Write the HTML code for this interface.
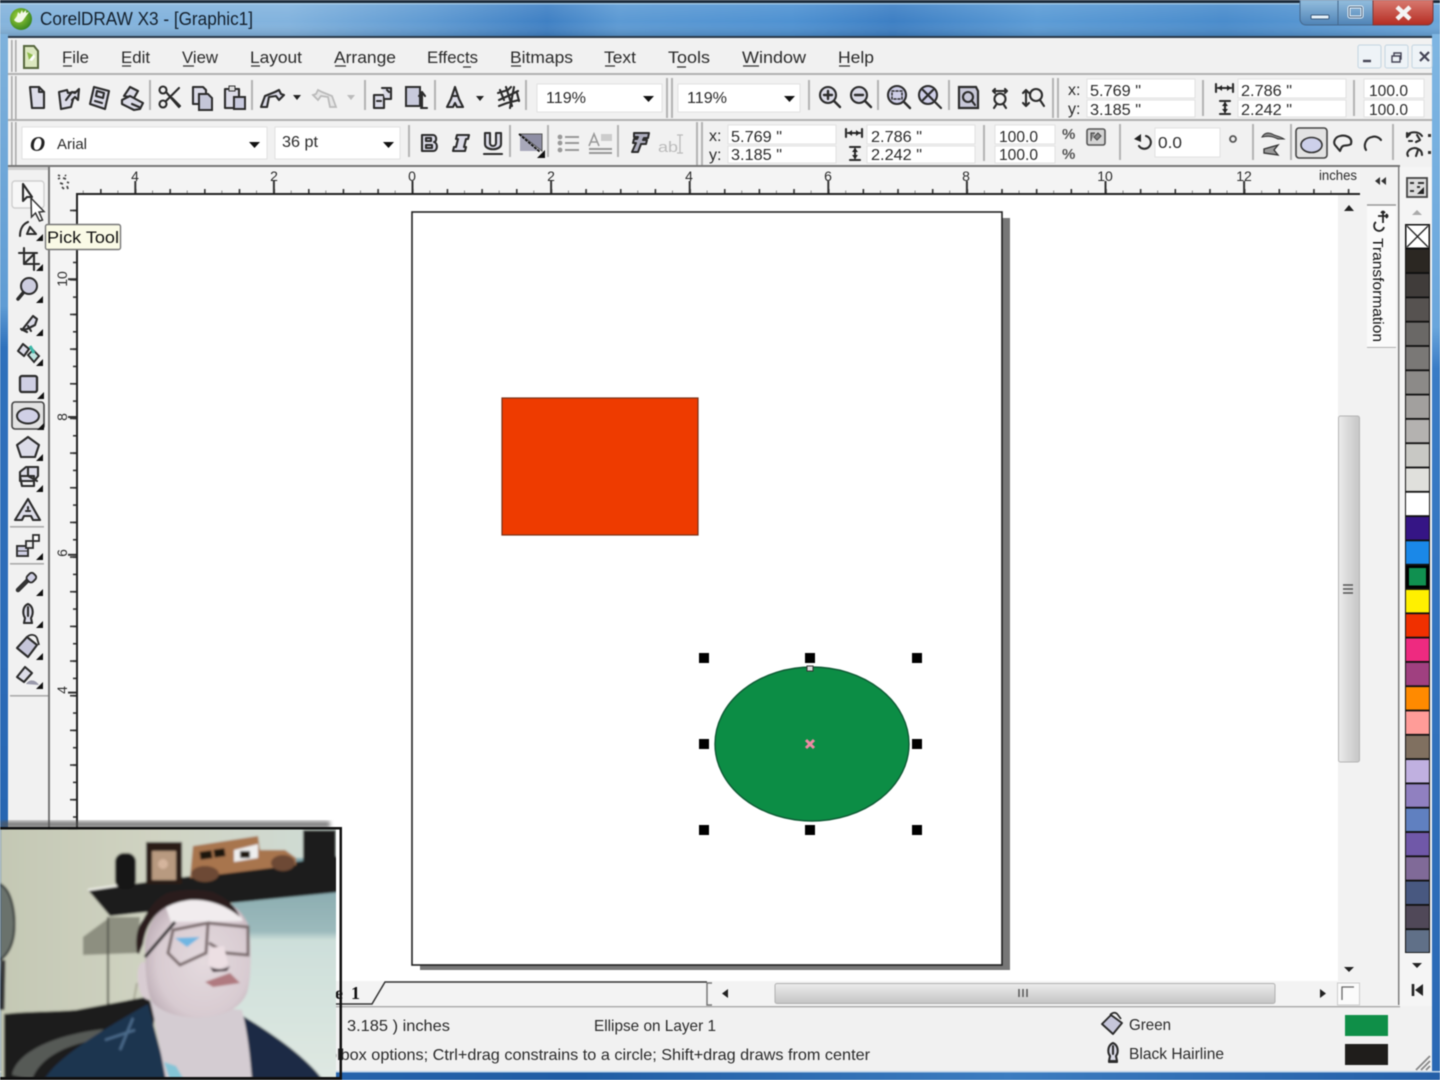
<!DOCTYPE html>
<html><head><meta charset="utf-8"><title>CorelDRAW X3</title>
<style>
html,body{margin:0;padding:0;background:#f1f1f1;width:1440px;height:1080px;overflow:hidden}
svg{display:block}
#root{filter:blur(.55px)}
text{font-family:"Liberation Sans",sans-serif;fill:#2a2a2a}
.m{font-size:17px}.t{font-size:16px}.s{font-size:15px}
.i{fill:#dcdce8;stroke:#2c2c2c;stroke-width:2.1;stroke-linejoin:round;stroke-linecap:round}
.n{fill:none;stroke:#2c2c2c;stroke-width:2.1;stroke-linejoin:round;stroke-linecap:round}
.g{stroke:#b4b4b4;stroke-width:2;fill:none}
.f{fill:#fff;stroke:#e2e2e2;stroke-width:1}
</style></head><body>
<svg id="root" width="1440" height="1080" viewBox="0 0 1440 1080" xmlns="http://www.w3.org/2000/svg">
<defs>
<linearGradient id="tb" x1="0" x2="1" y1="0" y2="0">
<stop offset="0" stop-color="#85b4dc"/><stop offset=".2" stop-color="#82b3de"/><stop offset=".3" stop-color="#5f9ad2"/><stop offset=".38" stop-color="#3f80c4"/><stop offset=".43" stop-color="#5c9ad4"/><stop offset=".55" stop-color="#4f92d2"/><stop offset=".62" stop-color="#3d7fc4"/><stop offset=".72" stop-color="#5c9cd6"/><stop offset=".85" stop-color="#4a8ccc"/><stop offset="1" stop-color="#6ba6da"/>
</linearGradient>
<linearGradient id="tv" x1="0" x2="0" y1="0" y2="1"><stop offset="0" stop-color="#fff" stop-opacity=".12"/><stop offset=".6" stop-color="#fff" stop-opacity="0"/><stop offset="1" stop-color="#123" stop-opacity=".16"/></linearGradient>
<linearGradient id="lb" x1="0" x2="0" y1="0" y2="1"><stop offset="0" stop-color="#7fb2dc"/><stop offset=".26" stop-color="#5f9cd4"/><stop offset=".3" stop-color="#2f71bc"/><stop offset=".6" stop-color="#2c6cb8"/><stop offset="1" stop-color="#1f5ca8"/></linearGradient>
<linearGradient id="rb" x1="0" x2="0" y1="0" y2="1"><stop offset="0" stop-color="#7fb6e2"/><stop offset=".28" stop-color="#6aa6dc"/><stop offset=".32" stop-color="#3a7cc6"/><stop offset="1" stop-color="#2a68b4"/></linearGradient>
<linearGradient id="bb" x1="0" x2="1" y1="0" y2="0"><stop offset="0" stop-color="#2d6cb6"/><stop offset=".4" stop-color="#1f5ca4"/><stop offset=".7" stop-color="#3c7cc0"/><stop offset="1" stop-color="#245fa8"/></linearGradient>
<linearGradient id="vth" x1="0" x2="1" y1="0" y2="0"><stop offset="0" stop-color="#ececec"/><stop offset=".5" stop-color="#d8d8d8"/><stop offset="1" stop-color="#c6c6c6"/></linearGradient>
<linearGradient id="hth" x1="0" x2="0" y1="0" y2="1"><stop offset="0" stop-color="#ececec"/><stop offset=".5" stop-color="#d8d8d8"/><stop offset="1" stop-color="#c4c4c4"/></linearGradient>
<linearGradient id="cl" x1="0" x2="0" y1="0" y2="1"><stop offset="0" stop-color="#d87a70"/><stop offset="1" stop-color="#b52c22"/></linearGradient>
<linearGradient id="gl" x1="0" x2="0" y1="0" y2="1"><stop offset="0" stop-color="#94bede"/><stop offset="1" stop-color="#4f83b6"/></linearGradient>
<radialGradient id="logo" cx=".4" cy=".4" r=".7"><stop offset="0" stop-color="#a4d63c"/><stop offset="1" stop-color="#2c7c1c"/></radialGradient>
<linearGradient id="wall" x1="0" x2="1" y1="0" y2="0"><stop offset="0" stop-color="#c4c8b4"/><stop offset=".45" stop-color="#d0d3c2"/><stop offset="1" stop-color="#cfdcd6"/></linearGradient>
<linearGradient id="wall2" x1="0" x2="0" y1="0" y2="1"><stop offset="0" stop-color="#7fa3a8"/><stop offset=".33" stop-color="#9cbabc"/><stop offset=".37" stop-color="#cddfda"/><stop offset="1" stop-color="#dfe8e2"/></linearGradient>
<radialGradient id="face" cx=".55" cy=".55" r=".62"><stop offset="0" stop-color="#e4dade"/><stop offset=".7" stop-color="#d8cbd1"/><stop offset="1" stop-color="#b9a9b2"/></radialGradient>
<filter id="bl"><feGaussianBlur stdDeviation="1.100"/></filter>
<filter id="sh"><feGaussianBlur stdDeviation="2"/></filter>
<pattern id="hr" x="412" y="181" width="17.33" height="12" patternUnits="userSpaceOnUse"><rect x="0" y="9.500" width="1" height="2.500" fill="#888"/></pattern>
<pattern id="hr2" x="412" y="181" width="34.66" height="12" patternUnits="userSpaceOnUse"><rect x="0" y="8" width="1.600" height="4" fill="#333"/></pattern>
<pattern id="hr3" x="412" y="181" width="138.6" height="12" patternUnits="userSpaceOnUse"><rect x="-.5" y="0" width="2" height="12" fill="#333"/><rect x="138.1" y="0" width="2" height="12" fill="#333"/></pattern>
<pattern id="vr" x="64" y="1.720" width="12" height="17.33" patternUnits="userSpaceOnUse"><rect x="9" y="0" width="3" height="1.600" fill="#333"/></pattern>
<pattern id="vr2" x="64" y="1.720" width="12" height="34.66" patternUnits="userSpaceOnUse"><rect x="6" y="0" width="6" height="1.600" fill="#333"/></pattern>
<pattern id="vr3" x="64" y="140.4" width="12" height="137.8" patternUnits="userSpaceOnUse"><rect x="4" y="0" width="8" height="2" fill="#333"/></pattern>
<symbol id="tri" viewBox="0 0 8 8" overflow="visible"><path d="M7 0V7H0z" fill="#111"/></symbol>
</defs>

<rect width="1440" height="1080" fill="#f1f1f1"/>
<!-- window frame -->
<rect width="1440" height="36" fill="url(#tb)"/><rect width="1440" height="36" fill="url(#tv)"/>
<rect width="1440" height="3" fill="#1c2c3c"/>
<rect y="3" width="1440" height="1.500" fill="#b8d8ee" opacity=".7"/>
<rect x="0" y="34" width="8" height="1046" fill="url(#lb)"/>
<rect x="1432" y="34" width="8" height="1046" fill="url(#rb)"/>
<rect x="8" y="36" width="1424" height="2" fill="#2a3a4a"/>
<rect x="0" y="1072" width="1440" height="8" fill="url(#bb)"/>
<rect x="0" y="1071" width="1440" height="1.500" fill="#bcd2e8"/>

<!-- title -->
<circle cx="21" cy="19" r="11" fill="url(#logo)"/>
<path d="M14 20c3 4 8 3 10-1l5-7-3 1 0-3-3 3-1-3-2 4-2-2-1 4z" fill="#f2f8e8"/>
<text x="40" y="25" font-size="18" textLength="213" lengthAdjust="spacingAndGlyphs" style="fill:#14202c">CorelDRAW X3 - [Graphic1]</text>

<!-- caption buttons -->
<path d="M1300 0H1433V19a6 6 0 0 1-6 6H1306a6 6 0 0 1-6-6z" fill="url(#gl)" stroke="#46688c"/>
<path d="M1373 0H1433V19a6 6 0 0 1-6 6H1373z" fill="url(#cl)" stroke="#7c3a3a"/>
<line x1="1338" y1="0" x2="1338" y2="25" stroke="#46688c"/>
<rect x="1311" y="15" width="18" height="4" rx="1" fill="#e8f2fa" stroke="#3a5a7c"/>
<rect x="1349" y="7" width="13" height="10" rx="1" fill="none" stroke="#f0f6fa" stroke-width="3"/><rect x="1349" y="7" width="13" height="10" rx="1" fill="none" stroke="#3a5a7c" stroke-width="1"/>
<path d="M1397 7L1410 19M1410 7L1397 19" stroke="#f4f4f4" stroke-width="4.500"/>

<!-- gripper lines & bar separators -->
<rect x="11" y="40" width="1.600" height="32" fill="#aaa"/><rect x="15" y="40" width="1.600" height="32" fill="#aaa"/>
<rect x="11" y="76" width="1.600" height="43" fill="#aaa"/><rect x="15" y="76" width="1.600" height="43" fill="#aaa"/>
<rect x="11" y="122" width="1.600" height="43" fill="#aaa"/><rect x="15" y="122" width="1.600" height="43" fill="#aaa"/>
<rect x="8" y="73" width="1424" height="2" fill="#b0b0b0"/>
<rect x="8" y="119" width="1424" height="2" fill="#b0b0b0"/>
<rect x="8" y="165" width="1392" height="2" fill="#777"/>

<!-- doc icon -->
<path d="M24 46h10l4 5v17H24z" fill="#dce8c0" stroke="#56663c" stroke-width="2"/><path d="M29 60l5-6 1 3-3 4z" fill="#fff"/><path d="M27 52l6 3-4 5z" fill="#8fbc4c"/>

<!-- menu -->
<g class="m">
<text x="62" y="63" textLength="27" lengthAdjust="spacingAndGlyphs">File</text>
<text x="121" y="63" textLength="29" lengthAdjust="spacingAndGlyphs">Edit</text>
<text x="182" y="63" textLength="36" lengthAdjust="spacingAndGlyphs">View</text>
<text x="250" y="63" textLength="52" lengthAdjust="spacingAndGlyphs">Layout</text>
<text x="334" y="63" textLength="62" lengthAdjust="spacingAndGlyphs">Arrange</text>
<text x="427" y="63" textLength="51" lengthAdjust="spacingAndGlyphs">Effects</text>
<text x="510" y="63" textLength="63" lengthAdjust="spacingAndGlyphs">Bitmaps</text>
<text x="604" y="63" textLength="32" lengthAdjust="spacingAndGlyphs">Text</text>
<text x="668" y="63" textLength="42" lengthAdjust="spacingAndGlyphs">Tools</text>
<text x="742" y="63" textLength="64" lengthAdjust="spacingAndGlyphs">Window</text>
<text x="838" y="63" textLength="36" lengthAdjust="spacingAndGlyphs">Help</text>
</g>
<path d="M63 66h9M122 66h9M183 66h11M251 66h9M335 66h11M463 67h8M511 66h10M605 66h10M677 67h9M743 66h16M839 66h11" stroke="#333" stroke-width="1.200" fill="none"/>

<!-- MDI buttons -->
<g fill="#eef3f7" stroke="#c3d4e0"><rect x="1358" y="45" width="23" height="23" rx="2"/><rect x="1385" y="45" width="23" height="23" rx="2"/><rect x="1412" y="45" width="20" height="23" rx="2"/></g>
<path d="M1363 61h8" stroke="#445" stroke-width="2.400"/>
<path d="M1392 56h8v6h-8zM1394 56v-3h7v6h-1" fill="none" stroke="#445" stroke-width="1.400"/>
<path d="M1420 52l9 9M1429 52l-9 9" stroke="#445" stroke-width="2.200"/>

<!-- TOOLBAR 1 -->
<g class="g"><path d="M150 80v30M252 80v30M365 80v30M435 80v30M526 80v30M809 80v30M878 80v30M949 80v30M1203 80v36M1354 80v36"/></g>
<path d="M667 78v40M672 78v40M1053 78v40M1058 78v40" class="g"/>
<!-- new -->
<path class="i" d="M30 87h9l5 5v16H32z"/><path class="n" d="M39 87v5h5"/>
<!-- open -->
<path class="i" d="M59 92l8-2 1 3 7-1-4 15-10 2z"/><path class="i" d="M66 100l6-8 3 1 4-4-1 11-3-3-3 3"/>
<!-- save -->
<path class="i" d="M94 87l15 4-4 18-15-5z"/><path class="n" d="M97 91l7 2-1 5-7-2zM95 101l7 2"/>
<!-- print -->
<path class="i" d="M124 96l6-9 8 4-4 7z"/><path class="i" d="M122 100l8-4 13 7-3 6-6 1-12-6z"/><path class="n" d="M132 104l7 3"/>
<!-- cut -->
<circle class="n" cx="163" cy="104" r="3.500"/><circle class="n" cx="163" cy="90" r="3.500"/><path class="n" d="M166 101l13-13M166 92l13 15M172 98l8 8"/>
<!-- copy -->
<path class="i" d="M193 87h10l3 3v4h-7v10h-6z"/><path fill="#c4c6d8" stroke="#2c2c2c" stroke-width="2" d="M199 94h9l4 4v12h-13z"/>
<!-- paste -->
<path class="i" d="M225 89h14v8h-5v11h-9z"/><rect x="229" y="86" width="6" height="5" fill="#ddd" stroke="#333"/><path fill="#c8cade" stroke="#2c2c2c" stroke-width="2" d="M234 97h11v12h-11z"/>
<!-- undo -->
<path class="i" d="M261 107l4-11 10-4 4-2 2 4 3 1-5 5-3-4-7 1-2 10z"/><path d="M293 95h8l-4 5z" fill="#222"/>
<!-- redo -->
<path d="M336 107l-4-11-10-4-4-2-2 4-3 1 5 5 3-4 7 1 2 10z" fill="#e6e6e6" stroke="#bbb" stroke-width="1.800"/><path d="M347 95h8l-4 5z" fill="#bbb"/>
<!-- import/export -->
<path class="i" d="M374 95h10v13h-10z"/><path class="i" d="M382 88h9v11h-6"/><path class="n" d="M377 101h4M387 90l2 2"/>
<path fill="#c8cadc" stroke="#2c2c2c" stroke-width="2" d="M406 87h14v19h-14z"/><path class="n" d="M422 92v15M419 96l3-4 3 4M421 108h6"/>
<!-- launcher -->
<path class="i" d="M455 87l4 12 4 8h-6l-2-4-2 4h-6l4-8z"/><path class="n" d="M453 96h4"/><path d="M476 96h8l-4 5z" fill="#222"/>
<!-- corel graphic -->
<path class="n" d="M498 93l10-3 3-3M499 100l11-5 8-4M506 87l6 19M514 87l-4 21M499 106l8-3 12-3M500 90l4 10M517 93l2 8" stroke-width="1.800"/>
<!-- combos -->
<rect class="f" x="537" y="84" width="125" height="28"/><text class="t" x="546" y="103" textLength="40" lengthAdjust="spacingAndGlyphs">119%</text><path d="M643 96h11l-5.500 6z" fill="#111"/>
<rect class="f" x="678" y="84" width="122" height="28"/><text class="t" x="687" y="103" textLength="40" lengthAdjust="spacingAndGlyphs">119%</text><path d="M784 96h11l-5.500 6z" fill="#111"/>
<!-- zoom icons -->
<g class="n"><circle cx="828" cy="95" r="8" fill="#dcdce8"/><path d="M834 101l6 6M824 95h8M828 91v8" stroke-width="2.400"/>
<circle cx="859" cy="95" r="8" fill="#dcdce8"/><path d="M865 101l6 6M855 95h8" stroke-width="2.400"/>
<circle cx="897" cy="95" r="9" fill="#cfcfe8"/><path d="M904 102l6 6" stroke-width="2.400"/><path d="M892 91h10v8h-10z" stroke-dasharray="2 2" stroke-width="1.500"/>
<circle cx="928" cy="95" r="9" fill="#cfcfe8"/><path d="M935 102l6 6M923 90l10 10M933 90l-10 10" stroke-width="2.200"/></g>
<path fill="#c8c8d8" stroke="#2c2c2c" stroke-width="2.200" d="M959 87h17l2 4v17h-19z"/><circle class="n" cx="968" cy="97" r="5"/><path class="n" d="M972 101l3 4"/>
<g class="n"><circle cx="1000" cy="99" r="5.500"/><path d="M993 91h14M993 91l2-2M993 91l2 2M1007 91l-2-2M1007 91l-2 2M996 105l-2 3M1004 105l2 3"/>
<circle cx="1036" cy="95" r="6"/><path d="M1040 100l4 6M1026 90v16M1026 90l-3 3M1026 90l3 3M1026 106l-3-3M1026 106l3-3"/></g>
<!-- coordinates -->
<text class="t" x="1068" y="95">x:</text><text class="t" x="1068" y="114">y:</text>
<rect class="f" x="1087" y="79" width="108" height="19"/><rect class="f" x="1087" y="100" width="108" height="17"/>
<text class="t" x="1090" y="96" textLength="51" lengthAdjust="spacingAndGlyphs">5.769 "</text><text class="t" x="1090" y="115" textLength="51" lengthAdjust="spacingAndGlyphs">3.185 "</text>
<path class="n" d="M1216 84v8M1233 84v8M1218 88h13" stroke-width="1.800"/><path d="M1218 88l4-3v6zM1231 88l-4-3v6z" fill="#222"/>
<path class="n" d="M1220 114h10M1220 101h10M1225 103v9" stroke-width="1.800"/><path d="M1225 102l-3 4h6zM1225 113l-3-4h6z" fill="#222"/>
<rect class="f" x="1238" y="79" width="108" height="19"/><rect class="f" x="1238" y="100" width="108" height="17"/>
<text class="t" x="1241" y="96" textLength="51" lengthAdjust="spacingAndGlyphs">2.786 "</text><text class="t" x="1241" y="115" textLength="51" lengthAdjust="spacingAndGlyphs">2.242 "</text>
<rect class="f" x="1364" y="79" width="60" height="19"/><rect class="f" x="1364" y="100" width="60" height="17"/>
<text class="t" x="1369" y="96" textLength="39" lengthAdjust="spacingAndGlyphs">100.0</text><text class="t" x="1369" y="115" textLength="39" lengthAdjust="spacingAndGlyphs">100.0</text>

<!-- PROPERTY BAR -->
<rect class="f" x="22" y="127" width="245" height="32"/>
<text x="30" y="151" font-size="21" font-weight="bold" font-style="italic" style="font-family:'Liberation Serif',serif;fill:#222">O</text>
<text class="s" x="57" y="149" textLength="30" lengthAdjust="spacingAndGlyphs">Arial</text>
<path d="M249 142h11l-5.500 6z" fill="#111"/>
<rect class="f" x="275" y="127" width="125" height="32"/>
<text class="t" x="282" y="147" textLength="36" lengthAdjust="spacingAndGlyphs">36 pt</text>
<path d="M383 142h11l-5.500 6z" fill="#111"/>
<g class="g"><path d="M409 125v32M510 125v32M548 125v32M618 125v32M984 125v36M1120 124v36M1253 124v36M1291 124v36M1393 124v36"/><path d="M697 122v43M702 122v43"/></g>
<path class="i" d="M422 135h11c4 0 4 7 1 7 4 1 4 9-1 9h-11z"/><path class="n" d="M426 138h5v3h-5zM426 145h6v3h-6z" stroke-width="1"/>
<path class="i" d="M457 135h12l-1 4h-2l-2 8h2l-1 4h-12l1-4h2l2-8h-2z"/>
<path class="i" d="M485 133h5v10c0 4 6 4 6 0v-10h5v11c0 7-16 7-16 0z"/><path class="n" d="M484 154h18" stroke-width="2"/>
<path fill="#8e8ea4" stroke="#555" d="M520 134h22v17z"/><path fill="#a8a8ba" d="M520 134v17h20z"/><path d="M519 134l21 18" stroke="#111" stroke-width="1.800" stroke-dasharray="3 1"/><path d="M545 150v8h-8z" fill="#111"/>
<g stroke="#999" stroke-width="2" fill="none"><circle cx="560" cy="137" r="1.400" fill="#999"/><circle cx="560" cy="143" r="1.400" fill="#999"/><circle cx="560" cy="150" r="1.400" fill="#999"/><path d="M565 137h14M565 143h14M565 150h14"/><path d="M589 149h23M589 153h23"/></g>
<path d="M589 146l5-12 5 12M591 142h6" stroke="#999" stroke-width="1.600" fill="none"/><rect x="601" y="134" width="11" height="7" fill="#ccc"/>
<path fill="#aeaebe" stroke="#2c2c2c" stroke-width="2" stroke-linejoin="round" d="M634 133h15l-1 5h-4l-1 2h4l-1 4h-5l-3 8h-6l4-9h-3l1-4h3l1-2h-4z"/>
<text class="s" x="658" y="152" style="fill:#bbb" textLength="20" lengthAdjust="spacingAndGlyphs">ab</text><path d="M680 135v18M677 135h6M677 153h6" stroke="#bbb" fill="none" stroke-width="1.300"/>
<text class="t" x="709" y="141">x:</text><text class="t" x="709" y="160">y:</text>
<rect class="f" x="728" y="125" width="108" height="19"/><rect class="f" x="728" y="146" width="108" height="17"/>
<text class="t" x="731" y="142" textLength="51" lengthAdjust="spacingAndGlyphs">5.769 "</text><text class="t" x="731" y="160" textLength="51" lengthAdjust="spacingAndGlyphs">3.185 "</text>
<path class="n" d="M846 129v8M862 129v8M848 133h12" stroke-width="1.800"/><path d="M848 133l4-3v6zM860 133l-4-3v6z" fill="#222"/>
<path class="n" d="M850 160h10M850 147h10M855 149v9" stroke-width="1.800"/><path d="M855 148l-3 4h6zM855 159l-3-4h6z" fill="#222"/>
<rect class="f" x="867" y="125" width="108" height="19"/><rect class="f" x="867" y="146" width="108" height="17"/>
<text class="t" x="871" y="142" textLength="51" lengthAdjust="spacingAndGlyphs">2.786 "</text><text class="t" x="871" y="160" textLength="51" lengthAdjust="spacingAndGlyphs">2.242 "</text>
<rect class="f" x="995" y="125" width="60" height="19"/><rect class="f" x="995" y="146" width="60" height="17"/>
<text class="t" x="999" y="142" textLength="39" lengthAdjust="spacingAndGlyphs">100.0</text><text class="t" x="999" y="160" textLength="39" lengthAdjust="spacingAndGlyphs">100.0</text>
<text x="1062" y="139" font-size="15" font-weight="bold" style="fill:#555">%</text><text x="1062" y="159" font-size="15" font-weight="bold" style="fill:#555">%</text>
<rect x="1087" y="129" width="18" height="16" rx="2" fill="#d4d4d4" stroke="#555" stroke-width="1.600"/><path d="M1091 141v-8h4M1098 133l3 3-4 4-3-3z" fill="#888" stroke="#444"/>
<path class="n" d="M1146 136a6.500 6.500 0 1 1-7 10" stroke-width="2.200"/><path d="M1134 139l7-5v8z" fill="#222"/>
<rect class="f" x="1155" y="128" width="65" height="29"/><text class="t" x="1158" y="148" textLength="24" lengthAdjust="spacingAndGlyphs">0.0</text>
<circle cx="1233" cy="139" r="3" fill="none" stroke="#555" stroke-width="1.800"/>
<path d="M1262 137c3-5 7-5 12-2 3 1 7 2 10 4h-6c-6-3-10-3-16-2z" fill="#888" stroke="#333"/><path d="M1264 149l14-4-4 5 4 5-14-2z" fill="#999" stroke="#333" stroke-width="1.300"/>
<rect x="1296" y="128" width="31" height="30" rx="3" fill="#e3e3e3" stroke="#444" stroke-width="1.600"/>
<ellipse cx="1311.500" cy="145" rx="10.500" ry="7.500" fill="#cdd0ea" stroke="#333" stroke-width="1.600"/>
<path class="n" d="M1351 144c2-8-7-9-11-8-5 1-7 6-5 9l5 6c1-2 1-4 3-5 2-1 6 0 8-2z" stroke-width="1.800"/>
<path class="n" d="M1366 150c-3-5 0-12 6-13 3-1 7 0 9 3" stroke-width="1.800"/>
<path class="n" d="M1407 136c2-5 12-5 15 0M1410 134l-3 3 0-4M1417 135l3 5-4 2M1409 141h3M1408 156c-3-5 5-10 10-7 3 1 4 3 4 6M1418 150l-2 6" stroke-width="1.600"/>
<rect x="1428" y="134" width="3" height="3" fill="#333"/><rect x="1428" y="151" width="3" height="3" fill="#333"/>

<!-- left toolbox -->
<rect x="48" y="167" width="2" height="860" fill="#777"/>
<rect x="8" y="167" width="40" height="3" fill="#d0d0d0"/>
<rect x="12" y="181" width="32" height="27" rx="3" fill="#f7f7f7" stroke="#cfcfcf" stroke-width="1.400"/>
<path class="n" d="M23 184v17l4-4 5 0z" fill="#dcdce8"/>
<path d="M31 198l.5 19 4-4 4 8 3-1-3.500-8 5-.5z" fill="#fff" stroke="#333" stroke-width="1.500"/>
<!-- shape -->
<path class="n" d="M20 236c0-7 3-12 8-14M27 234l3-7 6 7z" />
<use href="#tri" x="36" y="234" width="8" height="8"/>
<!-- crop -->
<path class="n" d="M19 253h18M24 248v16M34 255v15M24 264h15M25 263l9-9" stroke-width="2.300"/>
<use href="#tri" x="36" y="264" width="8" height="8"/>
<!-- zoom -->
<circle cx="29" cy="286" r="8" fill="#cdcddf" stroke="#2c2c2c" stroke-width="2"/><path d="M23 293l-5 6" stroke="#2c2c2c" stroke-width="3.500" stroke-linecap="round"/>
<use href="#tri" x="36" y="296" width="8" height="8"/>
<!-- freehand -->
<path class="i" d="M22 330l11-14 4 3-2 6-8 4zM21 329l6 3M28 326l3 5"/><use href="#tri" x="36" y="329" width="8" height="8"/>
<!-- smart -->
<path class="i" d="M18 351l5-7 6 5-5 7z"/><path fill="#bfe4e0" stroke="#2c2c2c" stroke-width="1.900" d="M28 355l5-5 6 6-5 6z"/><path d="M30 346l4 7" stroke="#3cb8a8" stroke-width="3"/><use href="#tri" x="36" y="359" width="8" height="8"/>
<!-- rect -->
<rect x="20" y="376" width="17" height="16" rx="2" fill="#cfcfe4" stroke="#2c2c2c" stroke-width="2.300"/><use href="#tri" x="37" y="392" width="8" height="8"/>
<!-- ellipse -->
<rect x="12" y="402" width="32" height="27" rx="3" fill="#e2e2e2" stroke="#444" stroke-width="1.600"/>
<ellipse cx="28" cy="416" rx="11" ry="7.500" fill="#d0d0e6" stroke="#2c2c2c" stroke-width="2"/><use href="#tri" x="37" y="423" width="8" height="8"/>
<!-- polygon -->
<path class="i" d="M28 437l11 8-4 12H21l-4-12z"/><use href="#tri" x="36" y="454" width="8" height="8"/>
<!-- basic -->
<path class="i" d="M20 472l6-5 12 0 0 9-4 5H20z"/><path class="n" d="M20 476h14v10H22zM28 468v8l9 5"/><use href="#tri" x="36" y="485" width="8" height="8"/>
<!-- text -->
<path class="i" d="M28 499l12 21h-7l-2-4h-7l-2 4h-7z"/><path class="n" d="M26 511h4M28 507v2"/>
<rect x="10" y="526" width="34" height="1.600" fill="#aaa"/>
<!-- blend -->
<rect x="17" y="546" width="11" height="10" fill="#cfcfe4" stroke="#2c2c2c" stroke-width="1.900"/><rect x="26" y="541" width="7" height="7" fill="#eee" stroke="#2c2c2c" stroke-width="1.800"/><rect x="33" y="535" width="6" height="6" fill="#fff" stroke="#2c2c2c" stroke-width="1.800"/><path d="M17 551h11" stroke="#333"/><use href="#tri" x="36" y="553" width="8" height="8"/>
<rect x="10" y="563" width="34" height="1.600" fill="#aaa"/>
<!-- eyedrop -->
<path d="M18 590l10-10" stroke="#333" stroke-width="4.500" stroke-linecap="round"/><rect x="27" y="574" width="9" height="8" rx="3" transform="rotate(-45 31 578)" fill="#cfcfe4" stroke="#2c2c2c" stroke-width="1.900"/><use href="#tri" x="36" y="589" width="8" height="8"/>
<!-- outline pen -->
<path class="i" d="M28 604c5 2 6 9 3 14l1 5h-8l1-5c-3-5-2-12 3-14z"/><path class="n" d="M28 607v9M24 623h8" stroke-width="2.400"/><use href="#tri" x="36" y="621" width="8" height="8"/>
<!-- fill -->
<path fill="#c6c6da" stroke="#2c2c2c" stroke-width="2.100" stroke-linejoin="round" d="M17 648l10-11 10 8-9 12z"/><path d="M27 637c3-3 8-3 10 1l2 7" fill="none" stroke="#2c2c2c" stroke-width="1.800"/><use href="#tri" x="36" y="653" width="8" height="8"/>
<!-- interactive fill -->
<path class="i" d="M17 677l8-10 7 6-8 9z"/><path d="M26 684c3-5 9-5 13 1z" fill="#99a"/><use href="#tri" x="36" y="682" width="8" height="8"/>
<rect x="10" y="695" width="38" height="1.600" fill="#aaa"/>

<!-- rulers -->
<rect x="50" y="167" width="1310" height="27" fill="#f4f4f4"/>
<rect x="50" y="167" width="28" height="860" fill="#f4f4f4"/>
<path d="M58 179l2-1M63 178l3 1M60 183l3 1M67 182l2 1M62 187l2 2M67 186l1 3M58 175l2 1M65 175l1 1" stroke="#444" stroke-width="1.800"/>
<rect x="78" y="181" width="1280" height="12" fill="url(#hr)"/>
<rect x="78" y="181" width="1280" height="12" fill="url(#hr2)"/>
<rect x="78" y="181" width="1280" height="12" fill="url(#hr3)"/>
<rect x="76" y="193" width="1284" height="2" fill="#222"/>
<rect x="76" y="193" width="2" height="835" fill="#222"/>
<rect x="64" y="195" width="12" height="830" fill="url(#vr)"/>
<rect x="64" y="195" width="12" height="830" fill="url(#vr2)"/>
<rect x="64" y="195" width="12" height="830" fill="url(#vr3)"/>
<g font-size="14" text-anchor="middle">
<text x="135" y="181">4</text><text x="274" y="181">2</text><text x="412" y="181">0</text><text x="551" y="181">2</text><text x="689" y="181">4</text><text x="828" y="181">6</text><text x="966" y="181">8</text><text x="1105" y="181">10</text><text x="1244" y="181">12</text>
<text transform="translate(67 279) rotate(-90)">10</text><text transform="translate(67 417) rotate(-90)">8</text><text transform="translate(67 553) rotate(-90)">6</text><text transform="translate(67 690) rotate(-90)">4</text>
</g>
<text x="1319" y="180" font-size="14" textLength="38" lengthAdjust="spacingAndGlyphs">inches</text>

<!-- canvas -->
<rect x="78" y="195" width="1260" height="786" fill="#fff"/>
<rect x="1002" y="218" width="8" height="752" fill="#777"/>
<rect x="420" y="965" width="590" height="5" fill="#777"/>
<rect x="412" y="212" width="590" height="753" fill="#fff" stroke="#222" stroke-width="1.600"/>
<rect x="502" y="398" width="196" height="137" fill="#ee3b00" stroke="#7a3018" stroke-width="1.200"/>
<ellipse cx="812" cy="744" rx="97" ry="77" fill="#0c8d45" stroke="#0e5a34" stroke-width="1.400"/>
<g fill="#000"><rect x="699" y="653" width="10" height="10"/><rect x="805" y="653" width="10" height="10"/><rect x="912" y="653" width="10" height="10"/><rect x="699" y="739" width="10" height="10"/><rect x="912" y="739" width="10" height="10"/><rect x="699" y="825" width="10" height="10"/><rect x="805" y="825" width="10" height="10"/><rect x="912" y="825" width="10" height="10"/></g>
<rect x="807" y="666" width="6" height="5" fill="#ddd" stroke="#333"/>
<path d="M806 740l8 8M814 740l-8 8" stroke="#ee8aa4" stroke-width="3"/>

<!-- tooltip -->
<rect x="45.500" y="224.500" width="75" height="25" rx="2" fill="#fafae6" stroke="#777" stroke-width="1.400"/>
<text x="47" y="243" font-size="17" textLength="72" lengthAdjust="spacingAndGlyphs" style="fill:#111">Pick Tool</text>

<!-- vertical scrollbar -->
<rect x="1338" y="195" width="22" height="786" fill="#f2f2f2"/>
<path d="M1344 211l5-6 5 6z" fill="#222"/>
<rect x="1338.500" y="416" width="21" height="346" rx="2" fill="url(#vth)" stroke="#b4b4b4"/>
<path d="M1343 585h10M1343 589h10M1343 593h10" stroke="#555" stroke-width="1.500"/>
<path d="M1344 967h10l-5 5z" fill="#222"/>

<!-- docker -->
<rect x="1360" y="167" width="39" height="838" fill="#f2f2f2"/>
<rect x="1398" y="167" width="1.400" height="838" fill="#777"/>
<path d="M1380 177v8l-5-4zM1386 177v8l-5-4z" fill="#333"/>
<path d="M1367 205h29M1367 347h29" stroke="#999" stroke-width="1.400"/><rect x="1367" y="206" width="29" height="141" fill="#fafafa"/>
<path d="M1383 211v12M1378 216h10M1383 211l-2 2M1383 211l2 2M1388 216l-2-2M1388 216l-2 2M1376 222a5 5 0 1 0 8 5" stroke="#222" stroke-width="1.800" fill="none"/>
<text transform="translate(1373 238) rotate(90)" font-size="15" textLength="104" lengthAdjust="spacingAndGlyphs" style="fill:#111">Transformation</text>

<!-- palette -->
<rect x="1400" y="167" width="32" height="840" fill="#f5f5f5"/>
<rect x="1407" y="178" width="20" height="19" fill="#ddd" stroke="#444" stroke-width="1.800"/>
<path d="M1410 183h4M1418 183h6M1410 191h4" stroke="#333" stroke-width="2"/><path d="M1424 187v7h-7z" fill="#222"/><rect x="1417" y="186" width="3" height="2" fill="#333"/>
<path d="M1412 215l5-5 5 5z" fill="#aaa"/>
<rect x="1405" y="224" width="25" height="729" fill="#111"/>
<rect x="1406.500" y="225.500" width="22" height="22" fill="#fff"/>
<path d="M1407 226l21 21M1428 226l-21 21" stroke="#222" stroke-width="1.300"/>
<g>
<rect x="1406" y="249.500" width="23" height="22.500" fill="#2b2722"/>
<rect x="1406" y="274" width="23" height="22.500" fill="#403c3a"/>
<rect x="1406" y="298.300" width="23" height="22.500" fill="#565250"/>
<rect x="1406" y="322.600" width="23" height="22.500" fill="#6a6866"/>
<rect x="1406" y="346.900" width="23" height="22.500" fill="#7a7876"/>
<rect x="1406" y="371.200" width="23" height="22.500" fill="#8c8a88"/>
<rect x="1406" y="395.500" width="23" height="22.500" fill="#a2a09e"/>
<rect x="1406" y="419.800" width="23" height="22.500" fill="#b4b2b0"/>
<rect x="1406" y="444.100" width="23" height="22.500" fill="#c8c8c4"/>
<rect x="1406" y="468.400" width="23" height="22.500" fill="#e0e0dc"/>
<rect x="1406" y="492.700" width="23" height="22.500" fill="#fff"/>
<rect x="1406" y="517" width="23" height="22.500" fill="#351585"/>
<rect x="1406" y="541.300" width="23" height="22.500" fill="#1a88e8"/>
<rect x="1406" y="565.600" width="23" height="22.500" fill="#000"/><rect x="1409" y="568" width="17" height="17.500" fill="#109050"/>
<rect x="1406" y="589.900" width="23" height="22.500" fill="#fff000"/>
<rect x="1406" y="614.200" width="23" height="22.500" fill="#f03000"/>
<rect x="1406" y="638.500" width="23" height="22.500" fill="#ee2a80"/>
<rect x="1406" y="662.800" width="23" height="22.500" fill="#a04080"/>
<rect x="1406" y="687.100" width="23" height="22.500" fill="#ff8a00"/>
<rect x="1406" y="711.400" width="23" height="22.500" fill="#ff9c98"/>
<rect x="1406" y="735.700" width="23" height="22.500" fill="#807060"/>
<rect x="1406" y="760" width="23" height="22.500" fill="#c0b0e0"/>
<rect x="1406" y="784.300" width="23" height="22.500" fill="#9080c0"/>
<rect x="1406" y="808.600" width="23" height="22.500" fill="#6080c0"/>
<rect x="1406" y="832.900" width="23" height="22.500" fill="#7058a8"/>
<rect x="1406" y="857.200" width="23" height="22.500" fill="#806a98"/>
<rect x="1406" y="881.500" width="23" height="22.500" fill="#485880"/>
<rect x="1406" y="905.800" width="23" height="22.500" fill="#504858"/>
<rect x="1406" y="930.100" width="23" height="22" fill="#607088"/>
</g>
<path d="M1412 963h10l-5 5z" fill="#222"/>
<path d="M1413 984v12" stroke="#222" stroke-width="2.600"/><path d="M1423 984v12l-8-6z" fill="#222"/>

<!-- page tabs + horizontal scroll -->
<rect x="78" y="981" width="1282" height="26" fill="#f3f3f3"/>
<path d="M335 1004h37l13-22h322" fill="#f3f3f3" stroke="#333" stroke-width="1.500"/>
<path d="M712 983h-5v22h5" fill="none" stroke="#777" stroke-width="1.500"/>
<text x="335" y="999" font-size="18" font-weight="bold" textLength="25" style="font-family:'Liberation Serif',serif;fill:#111">e 1</text>
<path d="M728 989v9l-6-4.500z" fill="#222"/>
<rect x="775" y="983.500" width="500" height="20" rx="2" fill="url(#hth)" stroke="#b0b0b0"/>
<path d="M1019 989v8M1023 989v8M1027 989v8" stroke="#555" stroke-width="1.500"/>
<path d="M1320 989v9l6-4.500z" fill="#222"/>
<rect x="1337.500" y="983" width="22" height="22" fill="#fbfbfb" stroke="#ccc"/>
<path d="M1342 1000v-13h12" stroke="#666" stroke-width="1.300" fill="none"/>

<!-- status bar -->
<rect x="8" y="1006" width="1424" height="65" fill="#f1f1f1"/>
<rect x="8" y="1006" width="1392" height="1.400" fill="#aaa"/>
<g class="t">
<text x="347" y="1031" textLength="103" lengthAdjust="spacingAndGlyphs">3.185 )  inches</text>
<text x="594" y="1031" textLength="122" lengthAdjust="spacingAndGlyphs">Ellipse on Layer 1</text>
<text x="328" y="1060" textLength="542" lengthAdjust="spacingAndGlyphs">olbox options; Ctrl+drag constrains to a circle; Shift+drag draws from center</text>
<text x="1129" y="1030" textLength="42" lengthAdjust="spacingAndGlyphs">Green</text>
<text x="1129" y="1059" textLength="95" lengthAdjust="spacingAndGlyphs">Black Hairline</text>
</g>
<path fill="#c6c6da" stroke="#2c2c2c" stroke-width="1.900" stroke-linejoin="round" d="M1102 1024l9-9 11 8-9 11z"/><path d="M1110 1015c3-3 6-3 8 0l3 4" stroke="#2c2c2c" stroke-width="1.700" fill="none"/>
<path class="i" d="M1113 1043c5 2 6 9 3 13l1 5h-8l1-5c-3-4-2-11 3-13z"/><path class="n" d="M1113 1046v8M1109 1062h8" stroke-width="2"/>
<rect x="1345" y="1015" width="43" height="21" fill="#0f8f48"/>
<rect x="1345" y="1044" width="43" height="21" fill="#1f1d1b"/>
<path d="M1416 1070l14-14M1421 1070l9-9M1426 1070l4-4" stroke="#888" stroke-width="1.800"/>

<!-- webcam -->
<rect x="0" y="821" width="330" height="7" fill="#555" opacity=".75" filter="url(#sh)"/>
<svg x="0" y="828" width="336" height="252" viewBox="0 828 336 252">
<g filter="url(#bl)">
<rect x="0" y="828" width="340" height="252" fill="url(#wall)"/>
<rect x="232" y="858" width="108" height="222" fill="url(#wall2)"/>
<path d="M83 955V937L110 917H140L137 953z" fill="#8d8f80"/>
<path d="M108 917v93" stroke="#55564c" stroke-width="2" fill="none"/>
<path d="M137 983l-5 27" stroke="#a8a896" stroke-width="2" fill="none"/>
<rect x="303" y="830" width="33" height="34" fill="#1a1a1a"/>
<path d="M88 890L340 856V892L230 903 110 916z" fill="#1c1b1a"/>
<path d="M88 890L135 883" stroke="#f4f4ee" stroke-width="2"/>
<rect x="115" y="853" width="21" height="36" rx="9" fill="#151515"/>
<rect x="146" y="842" width="36" height="42" fill="#2a1e18"/><rect x="152" y="851" width="24" height="29" fill="#b89a80"/><circle cx="163" cy="864" r="5" fill="#d4b49c"/>
<path d="M193 846L258 836 260 850 285 850 296 858 296 865 190 878z" fill="#a8754e"/>
<rect x="200" y="851" width="12" height="8" fill="#1c1410" transform="rotate(-8 206 855)"/><rect x="214" y="849" width="11" height="8" fill="#1c1410" transform="rotate(-8 219 853)"/><path d="M234 850l24-6 0 14-24 4z" fill="#eee"/><rect x="240" y="851" width="10" height="7" fill="#1c1410"/>
<ellipse cx="205" cy="874" rx="14" ry="8" fill="#6d4a34"/><ellipse cx="283" cy="863" rx="12" ry="8" fill="#6d4a34"/>
<path d="M0 884c12 6 16 30 14 50-2 14-8 22-14 26z" fill="#6b726c"/><path d="M0 884c12 6 16 30 14 50-2 14-8 22-14 26" fill="none" stroke="#23282a" stroke-width="2"/>
<path d="M2 1010L3 960" stroke="#333" stroke-width="5"/>
<path d="M4 1014c26-3 50-2 72-4l70-13 10 10-10 73H4z" fill="#1b1b1a"/>
<path d="M12 1075c4-22 40-40 92-46l-14 12c-30 6-52 20-58 39z" fill="#565a56"/>
<!-- shirt -->
<path d="M44 1080c10-18 40-40 104-76l20 76z" fill="#1f3450"/>
<path d="M243 1016c30 18 62 40 80 64H248z" fill="#1a2c44"/>
<path d="M120 1050l13-32M105 1040l30-10" stroke="#4c6c8c" stroke-width="2.500"/>
<!-- neck -->
<path d="M150 1000c8 34 12 60 16 80h86c-2-24-4-46-10-70z" fill="#d4ccd2"/>
<path d="M164 1062l6 18h14l-8-14z" fill="#84c4d6"/>
<!-- ear -->
<path d="M144 962c-8 0-8 20-3 32 2 4 6 6 9 6l-2-36z" fill="#d8ccd2"/>
<!-- face -->
<path d="M145 945c0 25 2 50 8 58 12 12 34 16 52 14 22-2 36-10 42-24 4-14 5-40 2-66-4-14-22-33-52-33-30 0-50 25-52 51z" fill="url(#face)"/>
<path d="M165 905c16-9 42-10 62 0 8 4 14 10 16 16l-72 1z" fill="#f1ecee"/>
<!-- hair -->
<path d="M137 953c-2-14 0-26 6-33 6-12 14-22 24-27 14-4 32-4 46-1 14 6 22 14 27 25-14-12-32-18-50-17-16 2-30 8-38 20-6 8-8 18-9 24l-4 10z" fill="#2a1c1a"/>
<!-- glasses -->
<path d="M145 957l30-35" stroke="#1f1d1c" stroke-width="3"/>
<path d="M173 930l35-7-2 30-26 12-12-12zM208 923l40 4v28l-22-2-17-10" fill="none" stroke="#796a6c" stroke-width="3"/>
<path d="M175 938l25-1-13 10z" fill="#6fb6e2"/>
<path d="M210 948l14-2 4 18-8 5-12-4z" fill="#ecdfe3"/>
<path d="M210 967c6 3 14 3 20-1l-3 5-14 1z" fill="#3b2a30"/>
<path d="M205 982l25-9 10 10-27 4z" fill="#b07a80"/>
</g>
</svg>
<rect x="0" y="827" width="342" height="2.500" fill="#111"/>
<rect x="339.500" y="827" width="2.500" height="253" fill="#111"/>
<rect x="0" y="1077" width="342" height="3" fill="#111"/>
</svg>
</body></html>
